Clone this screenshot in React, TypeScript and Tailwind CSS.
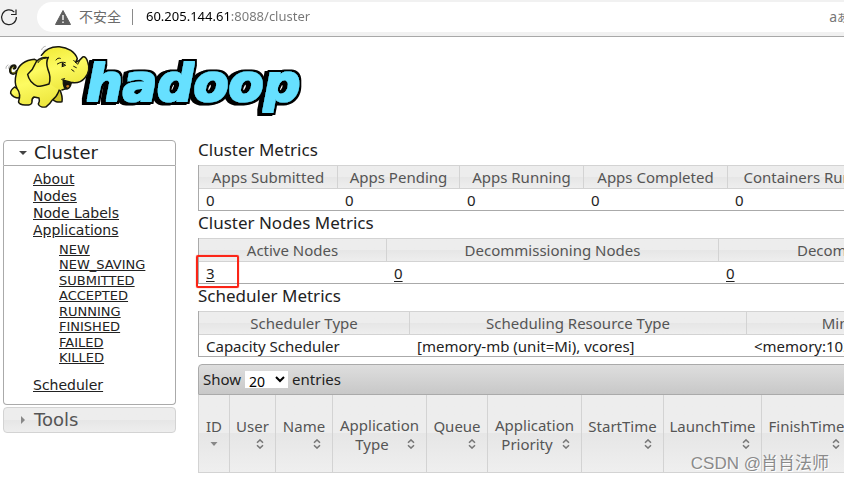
import type { ReactNode } from "react";

const appStates = [
  "NEW",
  "NEW_SAVING",
  "SUBMITTED",
  "ACCEPTED",
  "RUNNING",
  "FINISHED",
  "FAILED",
  "KILLED",
];

type Column = { label: string; width: number; value: ReactNode };

const clusterMetrics: Column[] = [
  { label: "Apps Submitted", width: 139, value: "0" },
  { label: "Apps Pending", width: 122, value: "0" },
  { label: "Apps Running", width: 124, value: "0" },
  { label: "Apps Completed", width: 144, value: "0" },
  { label: "Containers Running", width: 172, value: "0" },
];

const nodeMetrics: Column[] = [
  { label: "Active Nodes", width: 188, value: <HighlightedLink>3</HighlightedLink> },
  { label: "Decommissioning Nodes", width: 332, value: <CountLink>0</CountLink> },
  { label: "Decommissioned Nodes", width: 328, value: <CountLink>0</CountLink> },
];

const schedulerMetrics: Column[] = [
  { label: "Scheduler Type", width: 211, value: "Capacity Scheduler" },
  {
    label: "Scheduling Resource Type",
    width: 337,
    value: "[memory-mb (unit=Mi), vcores]",
  },
  { label: "Minimum Allocation", width: 292, value: "<memory:1024, vCores:1>" },
];

const appColumns = [
  { label: "ID", width: 31, sorted: true },
  { label: "User", width: 46 },
  { label: "Name", width: 57 },
  { label: "Application", second: "Type", width: 94 },
  { label: "Queue", width: 61 },
  { label: "Application", second: "Priority", width: 94 },
  { label: "StartTime", width: 82 },
  { label: "LaunchTime", width: 98 },
  { label: "FinishTime", width: 90 },
];

function CountLink({ children }: { children: ReactNode }) {
  return (
    <a href="#nodes" className="underline underline-offset-2">
      {children}
    </a>
  );
}

function HighlightedLink({ children }: { children: ReactNode }) {
  return (
    <span className="relative">
      <CountLink>{children}</CountLink>
      <span className="pointer-events-none absolute -top-2 -left-2.5 h-[33px] w-[43px] rounded-xs border-2 border-[#fb2416] shadow-[0_0_1px_#fb2416]" />
    </span>
  );
}

function MetricsTable({ title, columns }: { title: string; columns: Column[] }) {
  const total = columns.reduce((sum, column) => sum + column.width, 0);

  return (
    <section>
      <h2 className="flex h-[27px] items-center pb-1 text-[17px] leading-6">{title}</h2>
      <table
        className="table-fixed border-separate border-spacing-0 border-b border-l border-[#aaaaaa]"
        style={{ width: total }}
      >
        <colgroup>
          {columns.map((column) => (
            <col key={column.label} style={{ width: column.width }} />
          ))}
        </colgroup>
        <thead>
          <tr>
            {columns.map((column) => (
              <th
                key={column.label}
                className="h-6 border-y border-r border-[#d3d3d3] bg-linear-to-b from-[#ededed] from-50% via-[#e6e6e6] via-50% to-[#eeeeee] p-0 text-[15px] leading-5 font-normal whitespace-nowrap text-[#555555]"
              >
                {column.label}
              </th>
            ))}
          </tr>
        </thead>
        <tbody>
          <tr>
            {columns.map((column) => (
              <td
                key={column.label}
                className="h-[21px] py-0 pl-[7px] text-[15px] leading-5 whitespace-nowrap"
              >
                {column.value}
              </td>
            ))}
          </tr>
        </tbody>
      </table>
    </section>
  );
}

function SortIcon({ sorted }: { sorted?: boolean }) {
  if (sorted) {
    return (
      <svg viewBox="0 0 8 10" className="h-2.5 w-2" aria-hidden="true">
        <path d="M0.5 3h7L4 7z" fill="#888888" />
      </svg>
    );
  }
  return (
    <svg viewBox="0 0 8 10" className="h-2.5 w-2" fill="none" aria-hidden="true">
      <path d="M1 3.8 4 .9l3 2.9M1 6.2l3 2.9 3-2.9" stroke="#777777" strokeWidth="1.5" />
    </svg>
  );
}

function Logo() {
  return (
    <svg viewBox="0 114 960 258" className="h-[86px] w-80" aria-label="hadoop" role="img">
      <defs>
        <linearGradient id="skin" x1="0.3" y1="0" x2="0.6" y2="1">
          <stop offset="0" stopColor="#f2ec3c" />
          <stop offset="0.45" stopColor="#fdfb62" />
          <stop offset="1" stopColor="#ece53c" />
        </linearGradient>
        <filter id="outline" x="-10%" y="-10%" width="120%" height="120%">
          <feMorphology in="SourceGraphic" operator="dilate" radius="3" result="face" />
          <feMorphology in="SourceAlpha" operator="dilate" radius="10" result="edge" />
          <feOffset in="edge" dx="-10" dy="3" result="shade" />
          <feMerge>
            <feMergeNode in="shade" />
            <feMergeNode in="edge" />
            <feMergeNode in="face" />
          </feMerge>
        </filter>
      </defs>
      <text
        x="259"
        y="303"
        fill="#66e0ff"
        fontFamily="'DejaVu Sans', sans-serif"
        fontWeight="700"
        fontStyle="italic"
        fontSize="153"
        filter="url(#outline)"
      >
        hadoop
      </text>
      <g
        transform="translate(0 114)"
        fill="url(#skin)"
        stroke="#17170d"
        strokeWidth="4.5"
        strokeLinejoin="round"
        strokeLinecap="round"
      >
        <path d="M50 100c-5 9-17 9-19 0-2-9 4-17 11-17 6 1 5 8 0 8" fill="none" strokeWidth="8" />
        <path d="M48 101c-4 6-13 5-14-2-1-6 3-12 7-12" fill="none" stroke="#d9d136" strokeWidth="2" />
        <path d="M44 147c-7 5-13 12-12 19 5 9 14 14 25 14l8-18z" />
        <path d="M163 162c2 9 0 16-5 20 2 9 17 12 28 9 2-12-1-24-7-37z" fill="#d3c92a" />
        <path d="M104 64c-28 2-50 17-55 42-5 20-6 32 2 45 7 10 10 25 5 38-2 8 9 12 19 12 12 1 21-1 21-9-1-7 1-12 6-15l15 3c3 8 1 13-2 18 3 9 14 11 24 8 7-5 13-12 17-19 8-5 15-14 19-24l9-23c-20-40-45-62-80-76z" />
        <path
          d="M127 49c12-16 31-24 51-23 26 2 47 16 54 36l-5 11c9-3 16-9 21-16 7-3 12 4 15 14 6 16 3 35-8 48-10 12-26 18-43 14l-22-6c3 4 3 7 1 10 3 7 6 11 10 14l-17 6c-28-7-47-31-57-60z"
          stroke="none"
        />
        <path
          d="M124 52c12-18 33-27 54-26 26 2 47 16 54 36l-5 11c9-3 16-9 21-16 7-3 12 4 15 14 6 16 3 35-8 48-10 12-26 18-43 14l-22-6M191 137c3 7 6 11 10 14l-15 5"
          fill="none"
        />
        <path d="M190 127c7 6 15 8 24 7-2 9-6 18-13 19-7 0-12-8-11-26z" fill="#15120b" />
        <path d="M198 144c4-4 8-3 10 0-3 6-7 7-10 0z" fill="#c87a22" stroke="none" />
        <path d="M143 59c-19-2-33 6-39 21-5 15-11 20-21 29 3 16 15 29 30 36 12 0 22-3 34-7 5-14 3-29-3-43-4-12-7-24 1-37" />
        <path
          d="M114 74c4-8 13-13 25-14M168 66c3-5 8-7 13-5M172 78c8-5 15-7 24-4M186 75l11 7-11 4M221 67l12 12 5-9M221 85l8 4M215 95l7 5M185 124l9-2"
          fill="none"
          strokeWidth="3"
        />
        <ellipse cx="188" cy="80" rx="3" ry="6" fill="#111" stroke="none" />
        <path
          d="M125 35c2-6 6-9 11-10M130 40l7-7M18 91c0-5 2-8 6-10M26 91c0-5 2-8 5-9"
          fill="none"
          stroke="#888"
          strokeWidth="2"
        />
      </g>
    </svg>
  );
}

function BrowserBar() {
  return (
    <header className="flex h-[37px] items-start border-b border-[#a8a8a8] bg-[#f1f1f1] pt-0.5 font-['Noto_Sans','Noto_Sans_CJK_SC',sans-serif]">
      <button type="button" aria-label="Reload" className="mt-1.5 w-[37px]">
        <svg viewBox="0 0 18 18" className="size-[18px]" fill="none" aria-hidden="true">
          <path
            d="M14.3 4.1A7.4 7.4 0 1 0 16.4 9M16 1.5v5h-5"
            stroke="#222222"
            strokeWidth="1.2"
          />
        </svg>
      </button>
      <div className="flex h-[30px] min-w-0 flex-1 items-center overflow-hidden rounded-l-full bg-white pl-[18px] text-[13px] whitespace-nowrap">
        <svg viewBox="0 0 16 15" className="h-[15px] w-4 shrink-0" aria-hidden="true">
          <path d="M8 .5 15.5 14.5H.5z" fill="#5f5f5f" stroke="#5f5f5f" strokeLinejoin="round" />
          <path d="M8 5v5M8 11.5v1.4" stroke="#fff" strokeWidth="1.4" />
        </svg>
        <span className="ml-2 text-sm text-[#6b6b6b]">不安全</span>
        <span className="mx-[11px] h-4 w-px shrink-0 bg-[#8a8a8a]" />
        <input
          type="text"
          aria-label="Address"
          defaultValue="60.205.144.61:8088/cluster"
          className="ml-0.5 min-w-0 flex-1 bg-linear-to-r from-black from-[85px] to-[#767676] to-[85px] bg-clip-text text-transparent caret-black outline-none"
        />
        <span className="-mr-1 text-sm text-[#777777]">
          a<span className="text-[11px]">あ</span>
        </span>
      </div>
    </header>
  );
}

function Sidebar() {
  return (
    <nav className="mt-0.5 w-[173px] shrink-0 font-['DejaVu_Sans',sans-serif] text-[#222222]">
      <h3 className="flex h-[26px] items-center rounded-t border border-[#aaaaaa] pl-[15px] text-lg">
        <svg viewBox="0 0 8 6" className="mr-[7px] h-1.5 w-2" aria-hidden="true">
          <path d="M0 1h8L4 5z" fill="#444444" />
        </svg>
        Cluster
      </h3>
      <div className="rounded-b border border-t-0 border-[#aaaaaa] pt-[5px] pb-2.5 pl-[29px] text-sm leading-[17px]">
        <ul>
          {["About", "Nodes", "Node Labels", "Applications"].map((label) => (
            <li key={label}>
              <a href="#cluster" className="underline">
                {label}
              </a>
            </li>
          ))}
        </ul>
        <ul className="mt-[3px] mb-3 flex h-[123px] flex-col justify-between pl-[26px] text-[13px] leading-[15px]">
          {appStates.map((state) => (
            <li key={state}>
              <a href="#apps" className="underline">
                {state}
              </a>
            </li>
          ))}
        </ul>
        <a href="#scheduler" className="underline">
          Scheduler
        </a>
      </div>
      <h3 className="mt-0.5 flex h-[26px] items-center rounded border border-[#d3d3d3] bg-linear-to-b from-[#ededed] from-50% via-[#e6e6e6] via-50% to-[#eeeeee] pl-[15px] text-lg text-[#555555]">
        <svg viewBox="0 0 8 8" className="mr-[7px] size-2" aria-hidden="true">
          <path d="M2 0v8l4-4z" fill="#888888" />
        </svg>
        Tools
      </h3>
    </nav>
  );
}

function ApplicationsTable() {
  const total = appColumns.reduce((sum, column) => sum + column.width, 0);

  return (
    <section className="mt-[7px] w-[860px]">
      <div className="flex h-[31px] items-center rounded-t border border-[#aaaaaa] bg-linear-to-b from-[#dedede] to-[#c8c8c8] pl-1 text-[15px]">
        <label htmlFor="page-size">Show</label>
        <select
          id="page-size"
          defaultValue="20"
          className="mx-1 h-[17px] w-[43px] bg-white text-sm leading-4 text-black"
        >
          <option>20</option>
          <option>40</option>
          <option>60</option>
          <option>80</option>
          <option>100</option>
        </select>
        <span>entries</span>
      </div>
      <table
        className="table-fixed border-separate border-spacing-0 border-l border-[#d3d3d3]"
        style={{ width: total }}
      >
        <colgroup>
          {appColumns.map((column, index) => (
            <col key={index} style={{ width: column.width }} />
          ))}
        </colgroup>
        <thead>
          <tr>
            {appColumns.map((column, index) => (
              <th
                key={index}
                className="h-[78px] border-r border-b border-[#d3d3d3] bg-linear-to-b from-[#ededed] from-50% via-[#e6e6e6] via-50% to-[#efefef] px-0 pt-0.5 pb-0 text-[15px] leading-[19px] font-normal whitespace-nowrap text-[#555555]"
              >
                {column.second ? (
                  <>
                    {column.label}
                    <span className="flex items-center pr-[11px] pl-1">
                      <span className="flex-1">{column.second}</span>
                      <SortIcon />
                    </span>
                  </>
                ) : (
                  <>
                    {column.label}
                    <span
                      className={
                        column.sorted
                          ? "flex h-4 items-center justify-center"
                          : "flex h-4 items-center justify-end pr-[11px]"
                      }
                    >
                      <SortIcon sorted={column.sorted} />
                    </span>
                  </>
                )}
              </th>
            ))}
          </tr>
        </thead>
      </table>
    </section>
  );
}

export default function App() {
  return (
    <div className="relative min-h-screen w-full overflow-hidden bg-white font-['Noto_Sans','Noto_Sans_CJK_SC',sans-serif] text-[#222222]">
      <BrowserBar />
      <div className="h-[101px] pt-px">
        <Logo />
      </div>
      <div className="flex items-start gap-[22px] pl-[3px]">
        <Sidebar />
        <main className="min-w-0 flex-1">
          <MetricsTable title="Cluster Metrics" columns={clusterMetrics} />
          <MetricsTable title="Cluster Nodes Metrics" columns={nodeMetrics} />
          <MetricsTable title="Scheduler Metrics" columns={schedulerMetrics} />
          <ApplicationsTable />
        </main>
      </div>
      <div className="absolute right-[15px] bottom-1.5 font-['Liberation_Sans','Noto_Sans_CJK_SC',sans-serif] text-[17px] leading-6 text-[#8a8a8a] [text-shadow:1px_1px_0_#ffffff]">
        CSDN @肖肖法师
      </div>
    </div>
  );
}
